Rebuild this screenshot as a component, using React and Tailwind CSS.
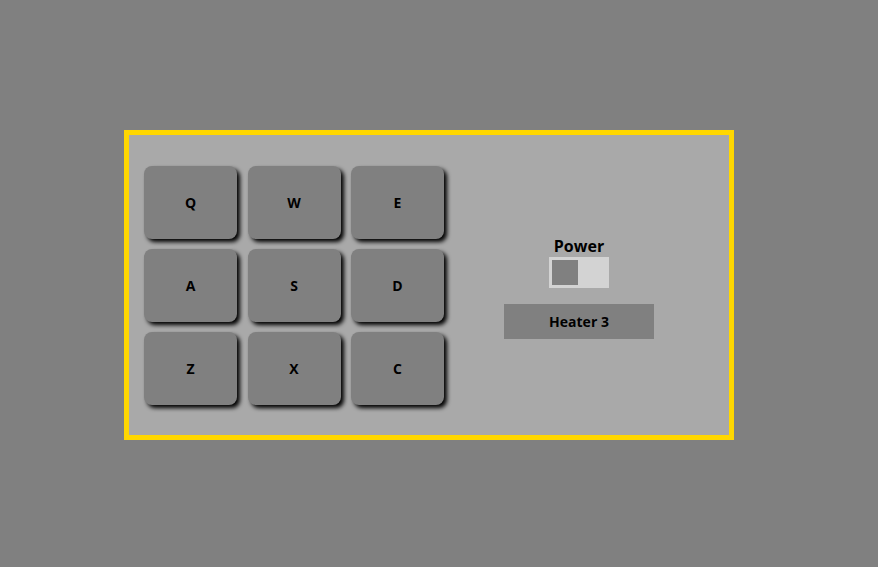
const keys = ['Q', 'W', 'E', 'A', 'S', 'D', 'Z', 'X', 'C'];

export default function App() {
  return (
    <div className="w-[878px] h-[567px] bg-[#808080] pt-[130px] pl-[124px]" style={{ fontFamily: '"Open Sans", "Noto Sans", sans-serif' }}>
      <div className="w-[610px] h-[310px] border-[5px] border-[#ffd700] bg-[#a9a9a9] flex items-center">
        <div className="ml-[15px] grid grid-cols-[93px_93px_93px] gap-x-[10.5px] gap-y-[10px]">
          {keys.map((k) => (
            <div
              key={k}
              className="h-[73px] rounded-[8px] bg-[#808080] shadow-[3px_3px_4px_#000] flex items-center justify-center text-[14px] font-bold text-black"
            >
              {k}
            </div>
          ))}
        </div>
        <div className="ml-[60px] mt-[4px] w-[150px] flex flex-col items-center">
          <div className="text-[16px] font-bold text-black leading-[20px]">Power</div>
          <div className="mt-[1px] w-[60px] h-[31px] bg-[#d3d3d3] p-[3px] flex">
            <div className="w-[26px] h-[25px] bg-[#808080]" />
          </div>
          <div className="mt-[16px] w-[150px] h-[35px] bg-[#808080] flex items-center justify-center text-[14px] font-bold text-black">
            Heater 3
          </div>
        </div>
      </div>
    </div>
  );
}
